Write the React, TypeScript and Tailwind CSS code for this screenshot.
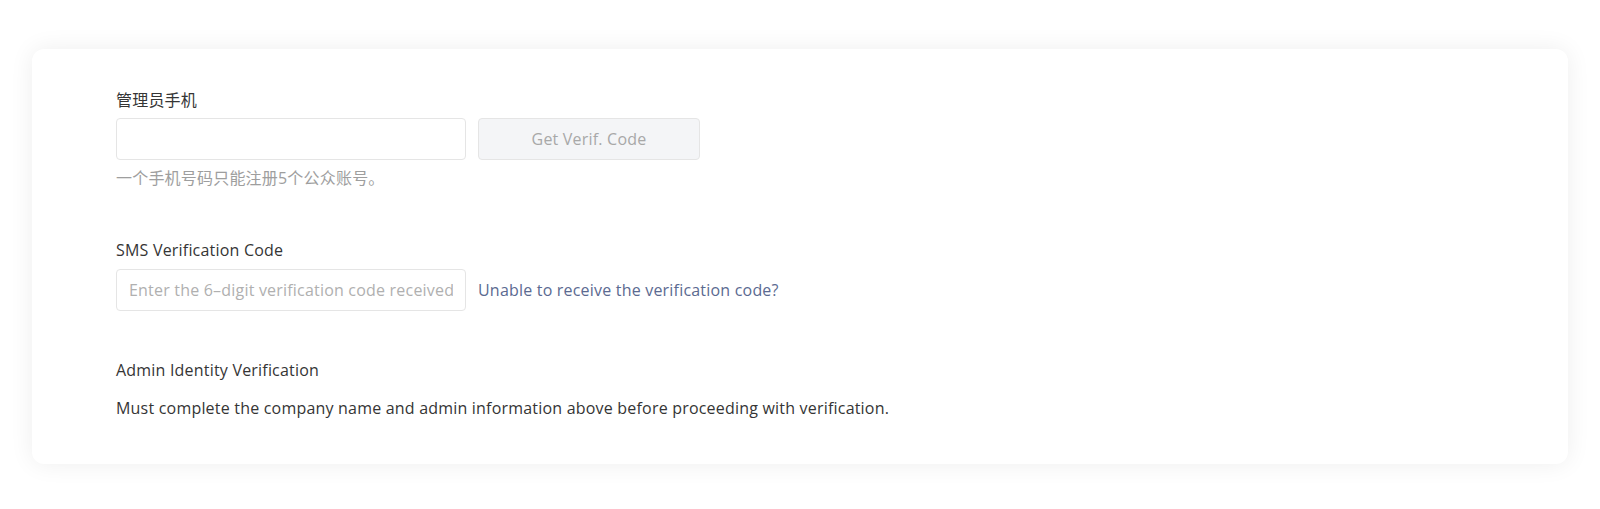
const fontStack = "font-['Open_Sans','Noto_Sans_CJK_SC',sans-serif] tracking-[0.2px]";

const App = () => {
  return (
    <div className={`min-h-[509px] w-full bg-white pt-[49px] px-[32px] ${fontStack}`}>
      <div className="rounded-[12px] bg-white pt-[39px] pb-[44px] pl-[84px] pr-[84px] shadow-[0_0_24px_rgba(0,0,0,0.07)]">
        <p className="text-[16px] leading-[24px] text-[#353535]">管理员手机</p>
        <div className="mt-[6px] flex gap-[12px]">
          <input
            className="h-[42px] w-[350px] rounded-[4px] border border-[#e5e5e5] px-[12px] text-[16px] outline-none"
            type="text"
          />
          <button className="h-[42px] w-[222px] rounded-[4px] border border-[#e5e5e5] bg-[#f4f5f7] text-[16px] text-[#a8a8a8]">
            Get Verif. Code
          </button>
        </div>
        <p className="mt-[6px] text-[16px] leading-[24px] text-[#9e9e9e]">一个手机号码只能注册5个公众账号。</p>

        <p className="mt-[48px] text-[16px] leading-[24px] text-[#353535]">SMS Verification Code</p>
        <div className="mt-[7px] flex items-center gap-[12px]">
          <input
            className="h-[42px] w-[350px] rounded-[4px] border border-[#e5e5e5] px-[12px] text-[16px] tracking-[0.2px] text-[#353535] outline-none placeholder:text-[#b0b0b0]"
            type="text"
            placeholder="Enter the 6–digit verification code received"
          />
          <a href="#" className="text-[16px] leading-[24px] text-[#5b6a91]">
            Unable to receive the verification code?
          </a>
        </div>

        <p className="mt-[47px] text-[16px] leading-[24px] text-[#353535]">Admin Identity Verification</p>
        <p className="mt-[14px] text-[16px] leading-[24px] text-[#353535]">
          Must complete the company name and admin information above before proceeding with verification.
        </p>
      </div>
    </div>
  );
};

export default App;
